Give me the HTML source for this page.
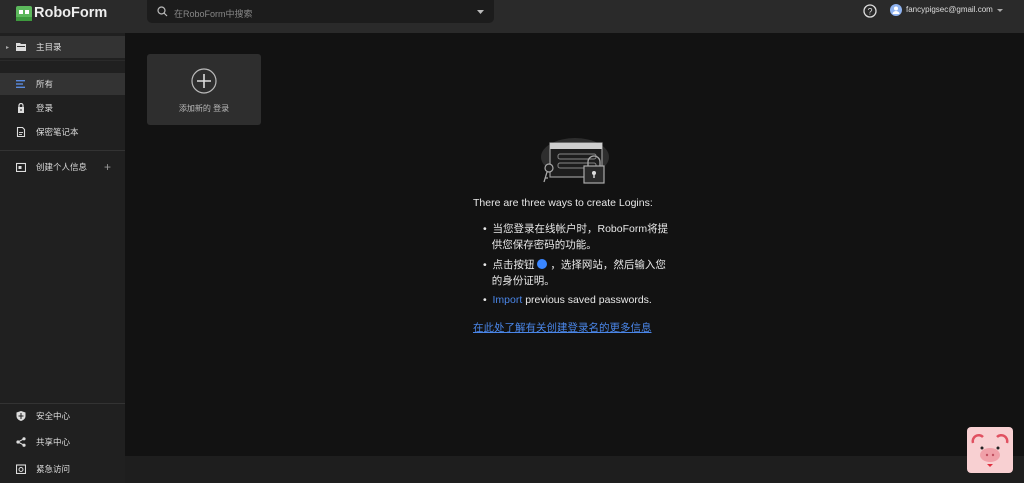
<!DOCTYPE html>
<html><head><meta charset="utf-8"><style>
*{margin:0;padding:0;box-sizing:border-box}
body{width:1024px;height:483px;background:#121212;font-family:"Liberation Sans","Noto Sans CJK SC",sans-serif;color:#ddd;position:relative;overflow:hidden;font-size:9px}
.hdr{position:absolute;left:0;top:0;width:1024px;height:33px;background:#2a2a2a}
.logo{position:absolute;left:16px;top:5px;display:flex;align-items:center;gap:2px;font-size:14.5px;font-weight:bold;color:#eee}
.search{position:absolute;left:147px;top:0;width:347px;height:23px;background:#1c1c1c;border-radius:0 0 5px 5px}
.search span{position:absolute;left:27px;top:7px;color:#888;font-size:9px}
.side{position:absolute;left:0;top:33px;width:125px;height:450px;background:#202020}
.item{position:absolute;left:0;width:125px;height:22px;display:flex;align-items:center;font-size:8.5px;color:#ddd}
.item .ic{position:absolute;left:16px;top:6px;width:10px;height:10px}
.item .t{position:absolute;left:36px}
.sep{position:absolute;left:0;width:125px;height:1px;background:#333}
.card{position:absolute;left:147px;top:54px;width:114px;height:71px;background:#2e2e2e;border-radius:3px}
.bot{position:absolute;left:125px;top:456px;width:899px;height:27px;background:#1e1e1e}
.txt{position:absolute;left:473px;color:#e8e8e8;font-size:10.5px}
</style></head><body>
<div class="hdr"></div>
<div class="logo"><svg width="16" height="15"><rect x="0" y="0" width="16" height="15" rx="2" fill="#5cb85c"/><rect x="3" y="4" width="4" height="4" fill="#fff"/><rect x="9" y="4" width="4" height="4" fill="#fff"/><rect x="0" y="11" width="16" height="4" fill="#3e9a3e"/></svg>RoboForm</div>
<div class="search"><svg style="position:absolute;left:10px;top:6px" width="11" height="11"><circle cx="4.5" cy="4.5" r="3.5" stroke="#bbb" fill="none" stroke-width="1.2"/><line x1="7" y1="7" x2="10" y2="10" stroke="#bbb" stroke-width="1.2"/></svg><span>在RoboForm中搜索</span><svg style="position:absolute;left:330px;top:10px" width="7" height="4"><path d="M0 0L7 0L3.5 4z" fill="#bbb"/></svg></div>
<svg style="position:absolute;left:863px;top:4px" width="14" height="14"><circle cx="7" cy="7" r="6" stroke="#ddd" fill="none" stroke-width="1.3"/><text x="7" y="10.5" font-size="9" fill="#ddd" text-anchor="middle" font-family="Liberation Sans">?</text></svg>
<svg style="position:absolute;left:890px;top:4px" width="12" height="12"><circle cx="6" cy="6" r="6" fill="#8fb3f0"/><circle cx="6" cy="4.5" r="2" fill="#fff"/><path d="M2.5 10a3.5 3 0 0 1 7 0z" fill="#fff"/></svg>
<div style="position:absolute;left:906px;top:5px;font-size:8px;color:#ddd">fancypigsec@gmail.com</div>
<svg style="position:absolute;left:997px;top:9px" width="6" height="4"><path d="M0 0L6 0L3 3z" fill="#aaa"/></svg>

<div class="side"></div>
<div class="item" style="top:36px;background:#333"><span style="position:absolute;left:6px;font-size:6px;color:#aaa">▸</span><svg class="ic" viewBox="0 0 10 10"><path d="M0 1h4l1 1h5v7H0z" fill="#ddd"/><rect x="1" y="4" width="8" height="1" fill="#333"/></svg><span class="t">主目录</span></div>
<div class="sep" style="top:60px;background:#2a2a2a"></div>
<div class="item" style="top:73px;background:#333"><svg class="ic" viewBox="0 0 10 10"><rect x="0" y="1" width="9" height="1.4" fill="#5a8be0"/><rect x="0" y="4.3" width="7" height="1.4" fill="#5a8be0"/><rect x="0" y="7.6" width="9" height="1.4" fill="#5a8be0"/></svg><span class="t">所有</span></div>
<div class="item" style="top:97px"><svg class="ic" viewBox="0 0 10 10"><path d="M3 4V2.5a2 2 0 0 1 4 0V4" stroke="#ddd" fill="none" stroke-width="1.2"/><rect x="2" y="4" width="6" height="6" fill="#ddd"/><rect x="4.5" y="6" width="1" height="2" fill="#202020"/></svg><span class="t">登录</span></div>
<div class="item" style="top:121px"><svg class="ic" viewBox="0 0 10 10"><path d="M1.5 0.5h5l2 2v7h-7z" stroke="#ddd" fill="none" stroke-width="1.1"/><rect x="3" y="5" width="4" height="0.9" fill="#ddd"/><rect x="3" y="7" width="3" height="0.9" fill="#ddd"/></svg><span class="t">保密笔记本</span></div>
<div class="sep" style="top:150px"></div>
<div class="item" style="top:156px"><svg class="ic" viewBox="0 0 10 10"><rect x="0.5" y="1.5" width="9" height="8" stroke="#ddd" fill="none" stroke-width="1.1"/><rect x="2.5" y="4" width="3" height="3" fill="#ddd"/></svg><span class="t">创建个人信息</span><span style="position:absolute;left:104px;font-size:12px;color:#999">+</span></div>
<div class="sep" style="top:403px"></div>
<div class="item" style="top:405px"><svg class="ic" viewBox="0 0 10 10"><path d="M5 0L9.5 1.5V5c0 2.5-2 4.3-4.5 5C2.5 9.3.5 7.5.5 5V1.5z" fill="#ddd"/><path d="M5 2v6M2.5 5h5" stroke="#202020" stroke-width="1"/></svg><span class="t">安全中心</span></div>
<div class="item" style="top:431px"><svg class="ic" viewBox="0 0 10 10"><circle cx="2" cy="5" r="1.6" fill="#ddd"/><circle cx="8" cy="1.8" r="1.6" fill="#ddd"/><circle cx="8" cy="8.2" r="1.6" fill="#ddd"/><path d="M2 5L8 1.8M2 5L8 8.2" stroke="#ddd" stroke-width="1"/></svg><span class="t">共享中心</span></div>
<div class="item" style="top:458px"><svg class="ic" viewBox="0 0 10 10"><rect x="0.5" y="1" width="9" height="8.5" stroke="#ddd" fill="none" stroke-width="1.1"/><circle cx="5" cy="5.5" r="2" stroke="#ddd" fill="none"/></svg><span class="t">紧急访问</span></div>

<div class="card"><svg style="position:absolute;left:44px;top:14px" width="26" height="26"><circle cx="13" cy="13" r="12" stroke="#bbb" fill="none" stroke-width="1.2"/><path d="M13 6v14M6 13h14" stroke="#ddd" stroke-width="1.6"/></svg><div style="position:absolute;left:0;width:114px;top:49px;text-align:center;font-size:8px;color:#bbb">添加新的 登录</div></div>

<svg style="position:absolute;left:538px;top:137px" width="74" height="50"><ellipse cx="37" cy="20" rx="34" ry="19" fill="#2e2e2e"/><rect x="12" y="6" width="52" height="34" fill="#1d1d1d" stroke="#999" stroke-width="1.2"/><rect x="12" y="6" width="52" height="6" fill="#cfcfcf"/><rect x="20" y="17" width="38" height="5" rx="2" stroke="#888" fill="none"/><rect x="20" y="26" width="38" height="5" rx="2" stroke="#888" fill="none"/><circle cx="11" cy="31" r="4" stroke="#aaa" fill="#1d1d1d" stroke-width="1.2"/><path d="M9 35l-3 10M7 41h3" stroke="#aaa" stroke-width="1.3"/><path d="M50 30v-5a6 6 0 0 1 12 0v5" stroke="#aaa" fill="none" stroke-width="1.3"/><rect x="46" y="29" width="20" height="17" fill="#2a2a2a" stroke="#aaa" stroke-width="1.2"/><circle cx="56" cy="36" r="2" fill="#ddd"/><rect x="55.3" y="37" width="1.4" height="4" fill="#ddd"/></svg>
<div class="txt" style="top:197px">There are three ways to create Logins:</div>
<div class="txt" style="top:221px;left:483px;line-height:16px;width:215px">•&nbsp;&nbsp;当您登录在线帐户时，RoboForm将提<br>&nbsp;&nbsp;&nbsp;供您保存密码的功能。</div>
<div class="txt" style="top:257px;left:483px;line-height:16px;width:215px">•&nbsp;&nbsp;点击按钮 <span style="display:inline-block;width:10px;height:10px;border-radius:50%;background:#3a86ff;vertical-align:-1px"></span> ，选择网站，然后输入您<br>&nbsp;&nbsp;&nbsp;的身份证明。</div>
<div class="txt" style="top:294px;left:483px">•&nbsp;&nbsp;<span style="color:#4a86e8">Import</span> previous saved passwords.</div>
<div class="txt" style="top:320px;color:#4a86e8;text-decoration:underline">在此处了解有关创建登录名的更多信息</div>

<div class="bot"></div>
<svg style="position:absolute;left:967px;top:427px" width="46" height="46"><rect width="46" height="46" rx="4" fill="#f8d0d2"/><path d="M6 16a6 6 0 0 1 10-6" stroke="#e05060" stroke-width="2.5" fill="none"/><path d="M30 10a6 6 0 0 1 10 6" stroke="#e05060" stroke-width="2.5" fill="none"/><circle cx="15" cy="21" r="1.5" fill="#222"/><circle cx="31" cy="21" r="1.5" fill="#222"/><ellipse cx="23" cy="28" rx="10" ry="7" fill="#f0a0a8"/><circle cx="20" cy="28" r="1.2" fill="#c05060"/><circle cx="26" cy="28" r="1.2" fill="#c05060"/><path d="M20 37h6l-3 3z" fill="#e03040"/></svg>
</body></html>
